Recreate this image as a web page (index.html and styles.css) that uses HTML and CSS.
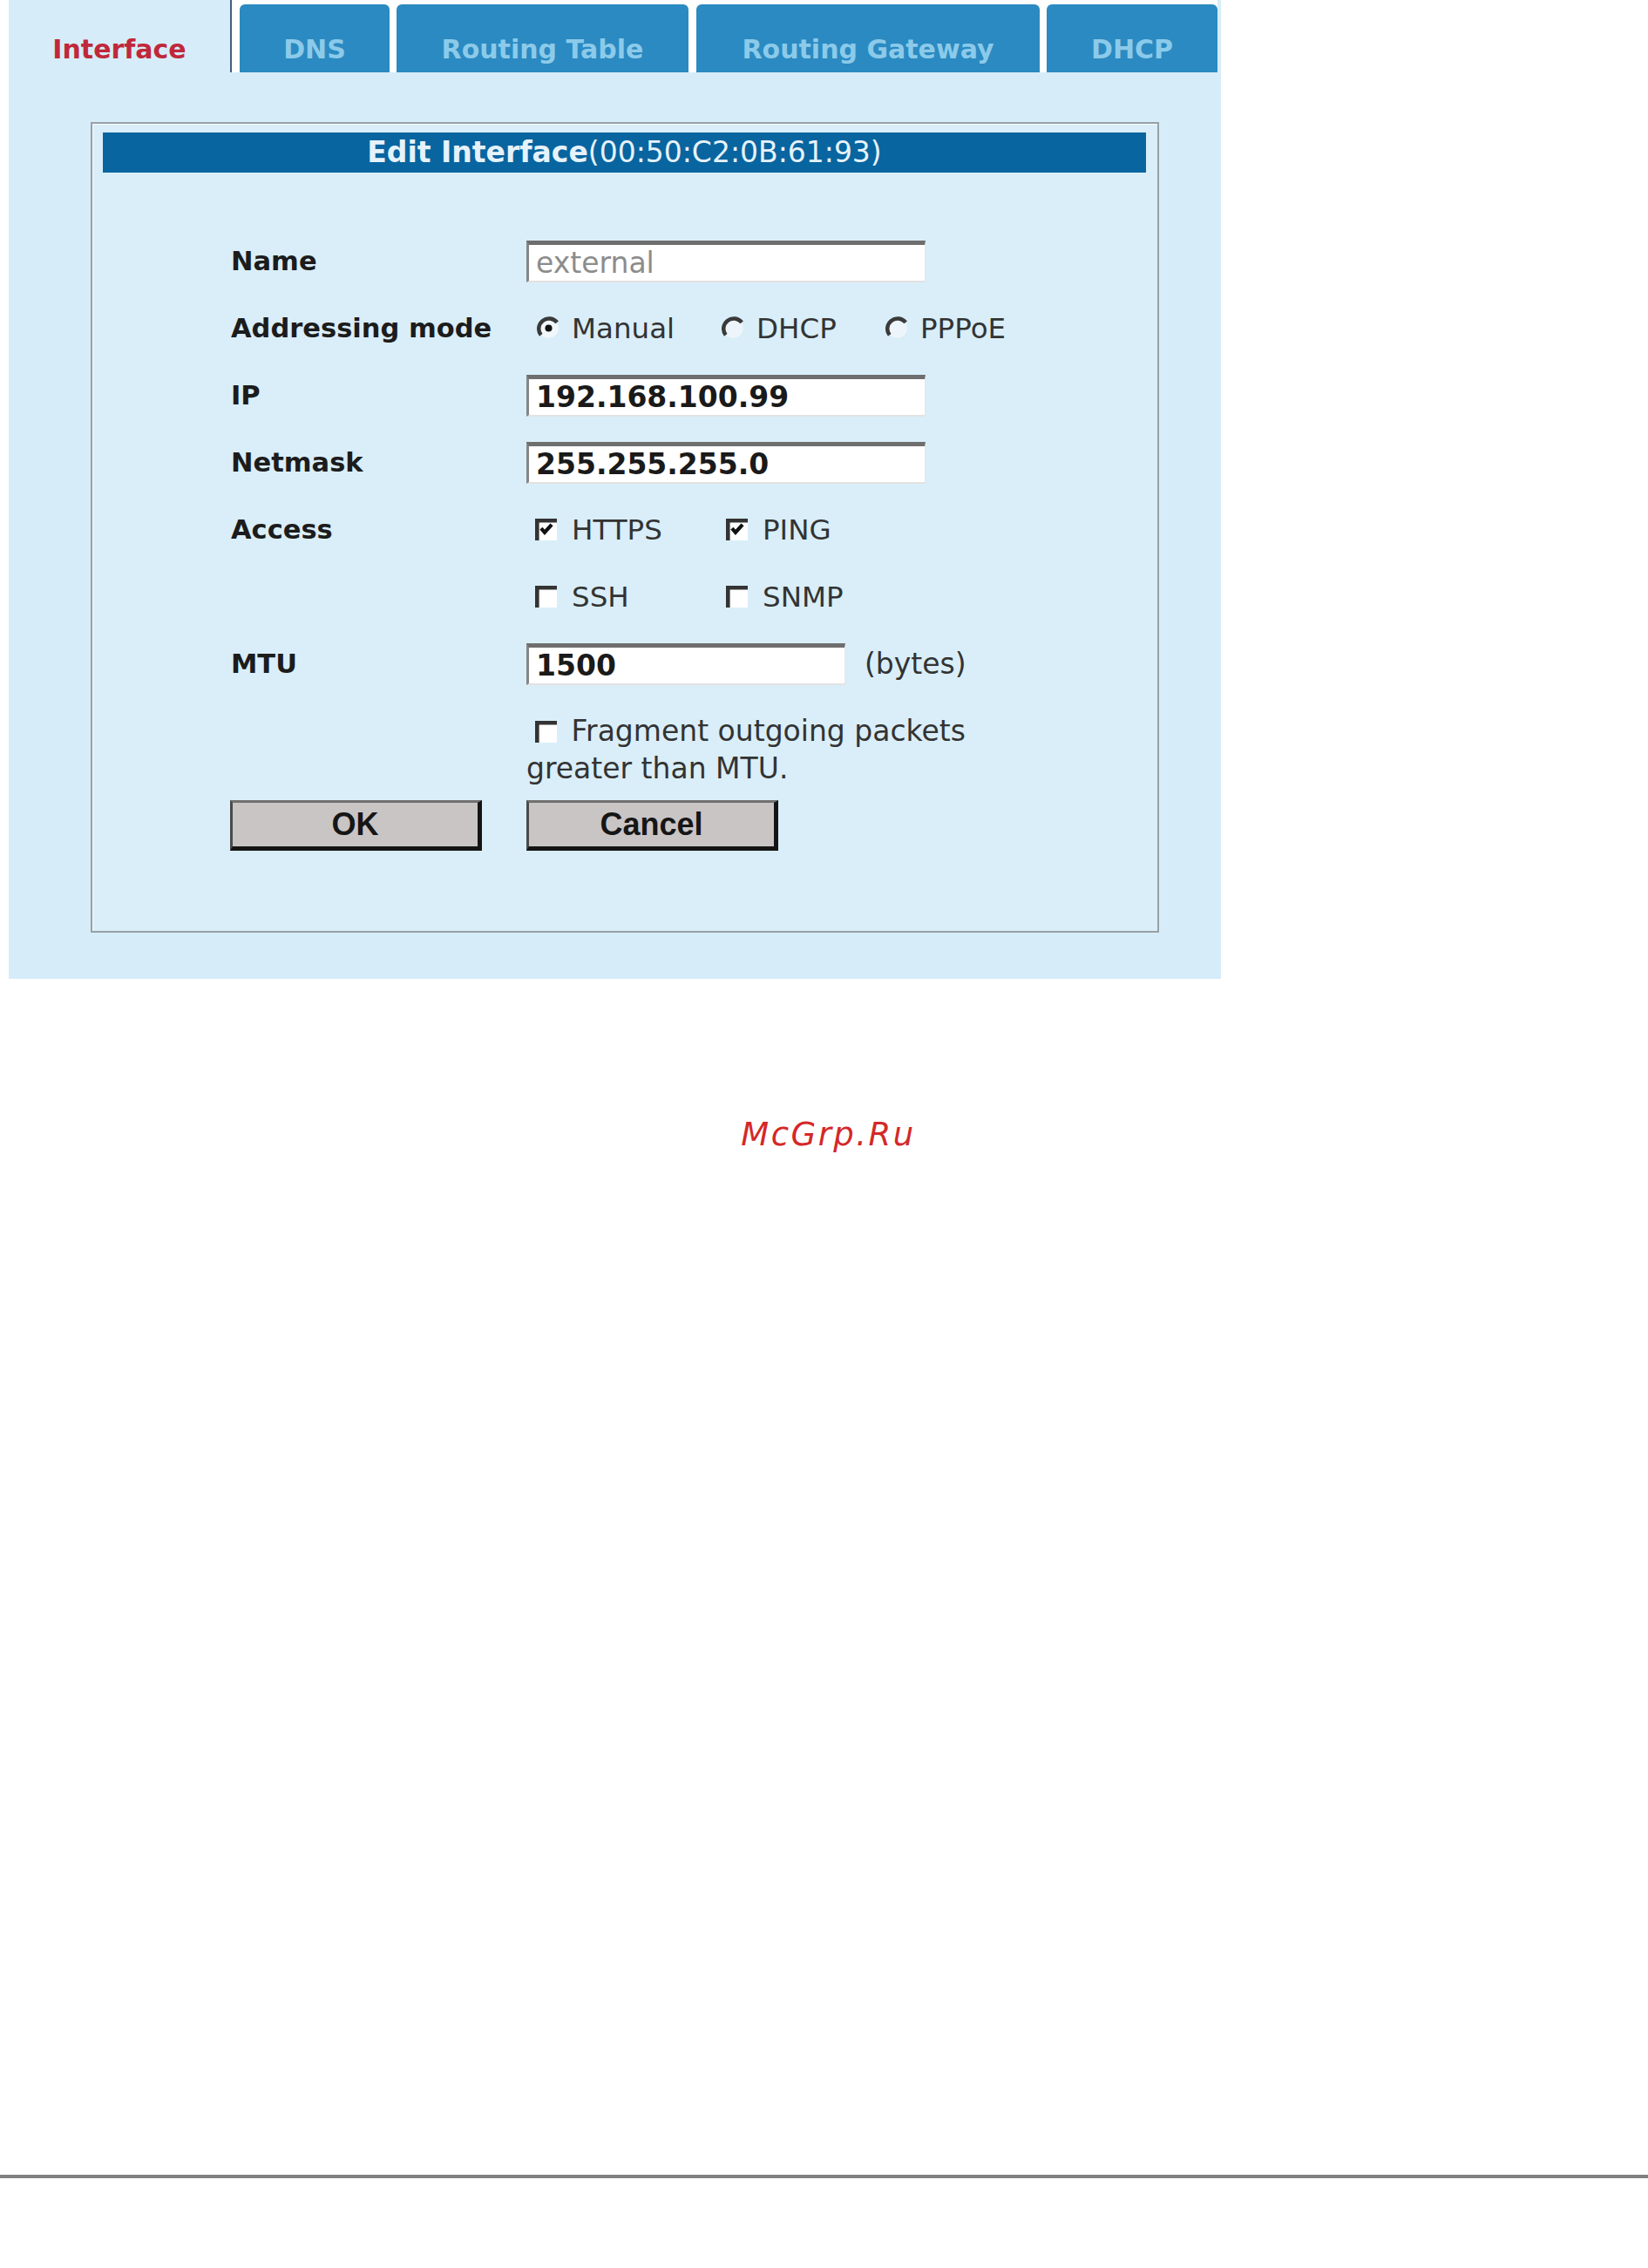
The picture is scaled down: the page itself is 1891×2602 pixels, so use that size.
FILE: index.html
```html
<!DOCTYPE html>
<html lang="en">
<head>
    <meta charset="UTF-8">
    <meta name="viewport" content="width=device-width, initial-scale=1.0">
    <title>Interface</title>
    <link rel="stylesheet" href="styles.css">
</head>
<body>

    <div class="panel">
        <div class="tabs">
            <div class="tab active tab-interface">Interface</div>
            <div class="tab tab-dns">DNS</div>
            <div class="tab tab-table">Routing Table</div>
            <div class="tab tab-gateway">Routing Gateway</div>
            <div class="tab tab-dhcp">DHCP</div>
            <div class="tab-rest"></div>
        </div>

        <div class="edit-box">
            <div class="edit-title"><b>Edit Interface</b>(00:50:C2:0B:61:93)</div>

            <div class="form">
                <div class="label">Name</div>
                <div class="value"><input class="field" value="external" disabled></div>

                <div class="label">Addressing mode</div>
                <div class="value choices radios">
                    <span class="choice mode-manual">
                        <svg class="radio" viewBox="0 0 12 12"><circle cx="6" cy="6" r="5" fill="#f2f7fa"/><path d="M2.1 9.5A5 5 0 0 1 10.3 3.1" fill="none" stroke="#3a3a3a" stroke-width="2"/><circle cx="6" cy="6" r="1.8" fill="#111"/></svg>
                        Manual
                    </span>
                    <span class="choice mode-dhcp">
                        <svg class="radio" viewBox="0 0 12 12"><circle cx="6" cy="6" r="5" fill="#eef5fa"/><path d="M2.1 9.5A5 5 0 0 1 10.3 3.1" fill="none" stroke="#3a3a3a" stroke-width="2"/></svg>
                        DHCP
                    </span>
                    <span class="choice">
                        <svg class="radio" viewBox="0 0 12 12"><circle cx="6" cy="6" r="5" fill="#eef5fa"/><path d="M2.1 9.5A5 5 0 0 1 10.3 3.1" fill="none" stroke="#3a3a3a" stroke-width="2"/></svg>
                        PPPoE
                    </span>
                </div>

                <div class="label">IP</div>
                <div class="value"><input class="field" value="192.168.100.99"></div>

                <div class="label">Netmask</div>
                <div class="value"><input class="field" value="255.255.255.0"></div>

                <div class="label">Access</div>
                <div class="value choices checks">
                    <span class="choice access-first">
                        <svg class="box" viewBox="0 0 13 13"><rect width="13" height="13" fill="#fff"/><path d="M1.2 13V1.2H13" fill="none" stroke="#333" stroke-width="2.4"/><path d="M3.6 5.8l2.1 2.4 4.2-4.6" fill="none" stroke="#111" stroke-width="2.2"/></svg>
                        HTTPS
                    </span>
                    <span class="choice">
                        <svg class="box" viewBox="0 0 13 13"><rect width="13" height="13" fill="#fff"/><path d="M1.2 13V1.2H13" fill="none" stroke="#333" stroke-width="2.4"/><path d="M3.6 5.8l2.1 2.4 4.2-4.6" fill="none" stroke="#111" stroke-width="2.2"/></svg>
                        PING
                    </span>
                </div>

                <div class="label"></div>
                <div class="value choices checks">
                    <span class="choice access-first">
                        <svg class="box" viewBox="0 0 13 13"><rect width="13" height="13" fill="#fff"/><path d="M1.2 13V1.2H13" fill="none" stroke="#333" stroke-width="2.4"/></svg>
                        SSH
                    </span>
                    <span class="choice">
                        <svg class="box" viewBox="0 0 13 13"><rect width="13" height="13" fill="#fff"/><path d="M1.2 13V1.2H13" fill="none" stroke="#333" stroke-width="2.4"/></svg>
                        SNMP
                    </span>
                </div>

                <div class="label">MTU</div>
                <div class="value"><input class="field short" value="1500"><span class="unit">(bytes)</span></div>

                <div class="label"></div>
                <div class="note">
                    <svg class="box" viewBox="0 0 13 13"><rect width="13" height="13" fill="#fff"/><path d="M1.2 13V1.2H13" fill="none" stroke="#333" stroke-width="2.4"/></svg>
                    Fragment outgoing packets<br>greater than MTU.
                </div>

                <div><button class="btn btn-ok">OK</button></div>
                <div><button class="btn">Cancel</button></div>
            </div>
        </div>
    </div>

    <div class="watermark">McGrp.Ru</div>

    <div class="page-rule"></div>

</body>
</html>
```

FILE: styles.css
```css
body {
    margin: 0;
    background-color: #fff;
    font-family: "DejaVu Sans", Verdana, sans-serif;
    color: #1c1c1c;
}

.panel {
    margin-left: 10px;
    width: 1391px;
    height: 1123px;
    background-color: #d6edf9;
}

/* tab strip */
.tabs {
    display: flex;
    align-items: flex-end;
    height: 83px;
    background-color: #fff;
}

.tab {
    box-sizing: border-box;
    height: 78px;
    padding-bottom: 8px;
    display: flex;
    align-items: flex-end;
    justify-content: center;
    font-size: 30px;
    font-weight: bold;
    line-height: 36px;
    color: #8ccaea;
    background-color: #2b8ac1;
    border-radius: 6px 6px 0 0;
}

.tab.active {
    height: 83px;
    color: #c0283a;
    background-color: #d6edf9;
    border-right: 2px solid #40607c;
    border-radius: 0;
}

.tab-interface { width: 256px; }
.tab-dns { width: 172px; margin-left: 9px; }
.tab-table { width: 335px; margin-left: 8px; }
.tab-gateway { width: 394px; margin-left: 9px; }
.tab-dhcp { width: 196px; margin-left: 8px; }

.tab-rest {
    flex: 1;
    height: 83px;
    background-color: #d6edf9;
}

/* edit box */
.edit-box {
    box-sizing: border-box;
    width: 1226px;
    height: 930px;
    margin: 57px 0 0 94px;
    border: 2px solid #97a0a6;
    box-shadow: inset 1px 1px 0 #f4fafd;
    background-color: #d9eef9;
}

.edit-title {
    height: 46px;
    margin: 10px 13px 0 12px;
    background-color: #0865a0;
    color: #e6f2fa;
    font-size: 33px;
    line-height: 46px;
    text-align: center;
}

.form {
    display: grid;
    grid-template-columns: 339px 1fr;
    grid-template-rows: repeat(7, 77px) 118px 58px;
    align-items: center;
    margin-top: 63px;
    padding-left: 159px;
}

.label {
    font-size: 30.5px;
    font-weight: bold;
    color: #1c1c1c;
}

.value {
    display: flex;
    align-items: center;
}

.field {
    box-sizing: border-box;
    width: 458px;
    height: 48px;
    padding: 0 0 0 8px;
    border-style: solid;
    border-width: 5px 1px 2px 3px;
    border-color: #6e6e6e #e6e6e6 #e2e2e2 #858585;
    background-color: #fff;
    font-family: "DejaVu Sans", Verdana, sans-serif;
    font-size: 33px;
    font-weight: bold;
    color: #1a1a1a;
    outline: none;
}

.field:disabled {
    background-color: #fff;
    font-weight: normal;
    color: #8c8c8c;
}

.field.short {
    width: 366px;
}

.unit {
    margin-left: 22px;
    font-size: 33px;
    color: #333;
}

/* radios and checkboxes */
.choices {
    font-size: 32.5px;
    color: #333;
}

.choice {
    display: flex;
    align-items: center;
}

.radio {
    width: 27px;
    height: 27px;
    margin-right: 13px;
}

.box {
    width: 25px;
    height: 25px;
    margin-right: 17px;
}

.radios {
    padding-left: 12px;
}

.mode-manual { width: 212px; }
.mode-dhcp { width: 188px; }

.checks {
    padding-left: 10px;
}

.access-first { width: 219px; }

.note {
    align-self: start;
    padding-top: 17px;
    font-size: 33px;
    line-height: 43px;
    color: #333;
}

.note .box {
    margin: 0 6px 0 10px;
    vertical-align: -2px;
}

/* buttons */
.btn {
    box-sizing: border-box;
    width: 289px;
    height: 58px;
    padding: 0;
    border-style: solid;
    border-width: 3px 5px 5px 3px;
    border-color: #707070 #141414 #141414 #4a4a4a;
    background-color: #c9c5c5;
    font-family: "Liberation Sans", Arial, sans-serif;
    font-size: 36px;
    font-weight: bold;
    color: #161616;
    cursor: pointer;
}

.btn-ok {
    margin-left: -1px;
}

.watermark {
    margin-top: 157px;
    padding-left: 10px;
    text-align: center;
    font-family: "DejaVu Sans", sans-serif;
    font-style: oblique;
    font-size: 37px;
    line-height: 44px;
    letter-spacing: 2.5px;
    color: #d42828;
}

.page-rule {
    margin-top: 1171px;
    height: 4px;
    background-color: #808080;
}
```
